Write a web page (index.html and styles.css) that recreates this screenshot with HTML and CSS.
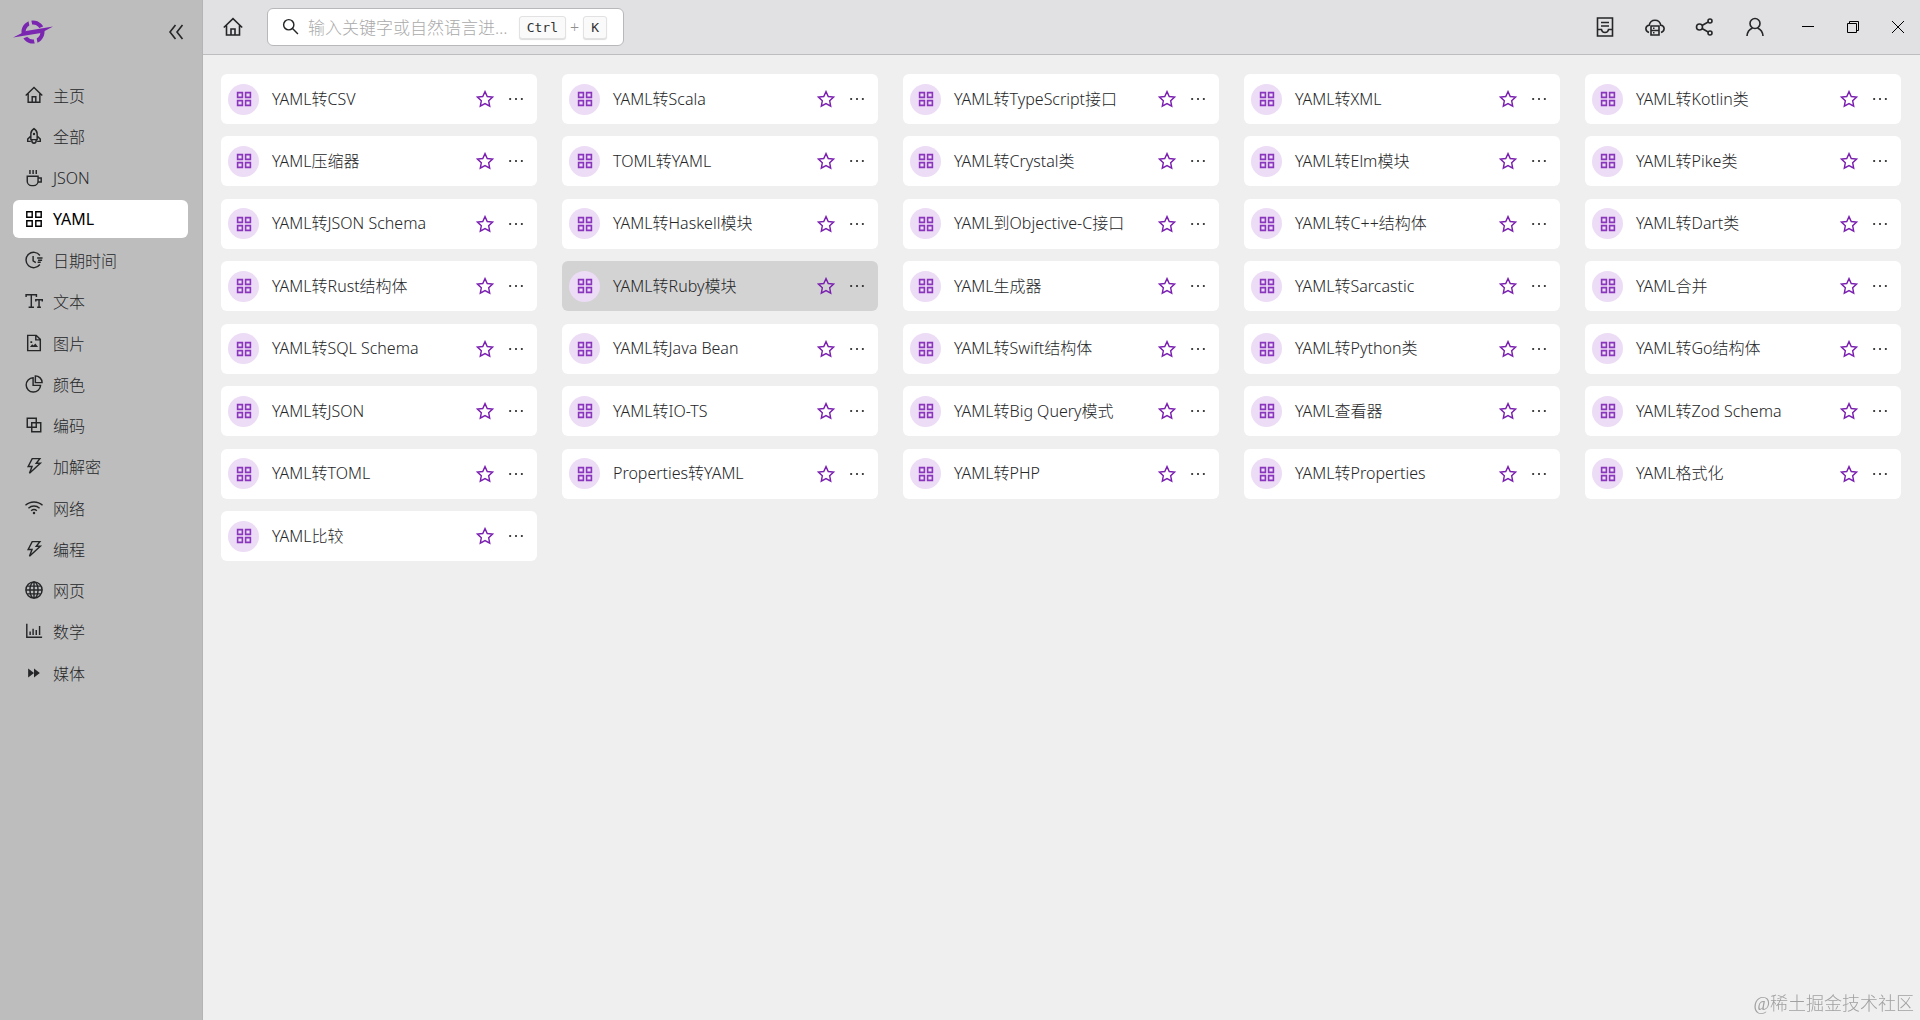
FILE: index.html
```
<!DOCTYPE html>
<html lang="zh-CN">

<head>
    <meta charset="UTF-8">
    <meta name="viewport" content="width=device-width, initial-scale=1.0">
    <title>YAML</title>
    <link rel="stylesheet" href="styles.css">
</head>

<body>
    <svg class="sprite" aria-hidden="true">
        <symbol id="i-home" viewBox="0 0 20 20"><path d="M.8 10.500 10 1.700l9.200 8.800M3.500 8.500v9.500h13v-9.500M8 18v-6h4v6" /></symbol>
        <symbol id="i-rocket" viewBox="0 0 20 20"><path d="M6.500 14V7.500C6.500 5 8 3 10 1.700 12 3 13.500 5 13.500 7.500V14zM6.500 10 3 13.500V16h3.500M13.500 10l3.500 3.500V16h-3.500M7.500 14.500c0 2 1 3.500 2.500 3.500s2.500-1.500 2.500-3.500" /><circle class="solid" cx="10" cy="7.800" r="1.300" /></symbol>
        <symbol id="i-cup" viewBox="0 0 20 20"><path d="M2.500 8h12v5.500a5 5 0 0 1-5 5H7.500a5 5 0 0 1-5-5zM14.500 10H18v4.500h-3.500M5.500 1v4.500M9 1v4.500M12.500 1v4.500" /></symbol>
        <symbol id="i-grid" viewBox="0 0 20 20"><path d="M2 2h6v6h-6zM12 2h6v6h-6zM2 12h6v6h-6zM12 12h6v6h-6z" /></symbol>
        <symbol id="i-time" viewBox="0 0 20 20"><path d="M16.500 5A8.500 8.500 0 1 0 16.500 15M9 5.500V11l3 2M13.500 7.800h6M14.500 10.200h4.500M14 12.500h3.500" /></symbol>
        <symbol id="i-text" viewBox="0 0 20 20"><path d="M1.200 5.500V3h11.500v2.500M7 3v14M4 17h6M12 10.500V8.700h7.200v1.800M15.600 8.700V17M13.500 17h4.200" /></symbol>
        <symbol id="i-image" viewBox="0 0 20 20"><path d="M3 1.500h9.500L17 6v12.500H3zM12 1.500v5h5" /><path class="solid" d="M5.500 14.500 8 11.500l1.500 1.200 2-2.200 3 4zM6 8h2v2H6z" /></symbol>
        <symbol id="i-pie" viewBox="0 0 20 20"><path d="M9 3a8 8 0 1 0 8.300 8.500H9zM11.500 1v7.500h7.500a7.500 7.500 0 0 0-7.500-7.500z" /></symbol>
        <symbol id="i-code" viewBox="0 0 20 20"><path d="M2.500 2.500h10v10h-10zM7.500 7.500h10v10h-10z" /></symbol>
        <symbol id="i-bolt" viewBox="0 0 20 20"><path d="M8 1.800h8.500L12.500 7H17L5 18l2.800-7.500H3.500z" /></symbol>
        <symbol id="i-wifi" viewBox="0 0 20 20"><path d="M.5 7c5.300-5 13.700-5 19 0M3.800 10.200c3.600-3.200 8.800-3.200 12.400 0M6.800 13c2-1.600 4.400-1.600 6.400 0" /><circle class="solid" cx="10" cy="15.500" r="1.400" /></symbol>
        <symbol id="i-globe" viewBox="0 0 20 20"><circle cx="10" cy="10" r="9" /><ellipse cx="10" cy="10" rx="4.500" ry="9" /><path d="M1 10h18M10 1v18M2.500 5.700h15M2.500 14.300h15" /></symbol>
        <symbol id="i-chart" viewBox="0 0 20 20"><path d="M2 2v15h17M5.700 14.500v-4M9 14.500V7.500M12.500 14.500V9M16.200 14.500V4.500" /></symbol>
        <symbol id="i-forward" viewBox="0 0 20 20"><path class="solid" d="M3.500 5 10 10l-6.500 5zM10 5 16.500 10 10 15z" /></symbol>
        <symbol id="i-collapse" viewBox="0 0 20 20"><path d="M9.500 3 4 10l5.500 7M16.500 3 11 10l5.500 7" /></symbol>
        <symbol id="i-search" viewBox="0 0 20 20"><circle cx="7.500" cy="7.500" r="5.700" /><path d="m11.700 11.700 6 6" /></symbol>
        <symbol id="i-star" viewBox="0 0 20 20"><path d="m10 1.800 2.500 5.400 5.900.7-4.300 4.100 1.100 5.900-5.200-2.900-5.200 2.900 1.100-5.900-4.300-4.100 5.900-.7z" /></symbol>
        <symbol id="i-more" viewBox="0 0 20 20"><circle class="solid" cx="3.500" cy="10" r="1.200" /><circle class="solid" cx="10" cy="10" r="1.200" /><circle class="solid" cx="16.500" cy="10" r="1.200" /></symbol>
        <symbol id="i-inbox" viewBox="0 0 20 20"><path d="M2.500 1h15v18h-15zM6 5.500h8M6 9h8M2.500 12.500h4c.500 4 6.500 4 7 0h4" /></symbol>
        <symbol id="i-cloud" viewBox="0 0 20 20"><path d="M4 15.500C-.500 14 .200 8.500 4.200 8.200 5.500 1.500 14.500 1.500 15.800 8.200c4 .3 4.700 5.800.2 7.300M6 9h8v9H6zM6 13.500h8M8 11.300h1.500M8 15.800h1.500" /></symbol>
        <symbol id="i-share" viewBox="0 0 20 20"><circle cx="4.500" cy="10" r="3" /><circle cx="15" cy="4" r="2" /><circle cx="15" cy="16" r="2" /><path d="m7 8.500 6.200-3.500M7 11.500l6.200 3.500" /></symbol>
        <symbol id="i-user" viewBox="0 0 20 20"><circle cx="10" cy="6.500" r="5" /><path d="M2 19c.3-4 2.500-6.700 5.500-8M18 19c-.3-4-2.500-6.700-5.500-8" /></symbol>
        <symbol id="i-min" viewBox="0 0 12 12"><path d="M0 5.500h12" /></symbol>
        <symbol id="i-max" viewBox="0 0 12 12"><path d="M.5 2.500h9v9h-9zM2.500 2.500v-2h9v9h-2" /></symbol>
        <symbol id="i-close" viewBox="0 0 12 12"><path d="m0 0 12 12M12 0 0 12" /></symbol>
    </svg>

    <div class="app">
        <aside class="sidebar">
            <div class="sidebar-head">
                <svg class="logo" viewBox="0 0 40 26" aria-hidden="true">
                    <circle cx="20" cy="13" r="9.500" />
                    <path class="logo-cut" d="M16.500 0 18 7M23.500 26 22 19" />
                    <path class="logo-gap" d="M6 19 34 8" />
                    <path class="logo-wing" d="M0 18.500 13 12 40 7.500 28 14z" />
                </svg>
                <button class="icon-btn" aria-label="收起"><svg class="icon icon-lg"><use href="#i-collapse" /></svg></button>
            </div>
            <nav class="menu">
                <a href="#"><svg class="icon"><use href="#i-home" /></svg>主页</a>
                <a href="#"><svg class="icon"><use href="#i-rocket" /></svg>全部</a>
                <a href="#"><svg class="icon"><use href="#i-cup" /></svg>JSON</a>
                <a href="#" class="active"><svg class="icon"><use href="#i-grid" /></svg>YAML</a>
                <a href="#"><svg class="icon"><use href="#i-time" /></svg>日期时间</a>
                <a href="#"><svg class="icon"><use href="#i-text" /></svg>文本</a>
                <a href="#"><svg class="icon"><use href="#i-image" /></svg>图片</a>
                <a href="#"><svg class="icon"><use href="#i-pie" /></svg>颜色</a>
                <a href="#"><svg class="icon"><use href="#i-code" /></svg>编码</a>
                <a href="#"><svg class="icon"><use href="#i-bolt" /></svg>加解密</a>
                <a href="#"><svg class="icon"><use href="#i-wifi" /></svg>网络</a>
                <a href="#"><svg class="icon"><use href="#i-bolt" /></svg>编程</a>
                <a href="#"><svg class="icon"><use href="#i-globe" /></svg>网页</a>
                <a href="#"><svg class="icon"><use href="#i-chart" /></svg>数学</a>
                <a href="#"><svg class="icon"><use href="#i-forward" /></svg>媒体</a>
            </nav>
        </aside>

        <div class="main">
            <header class="topbar">
                <button class="icon-btn" aria-label="主页"><svg class="icon icon-lg"><use href="#i-home" /></svg></button>
                <label class="search">
                    <svg class="icon"><use href="#i-search" /></svg>
                    <input type="text" placeholder="输入关键字或自然语言进行搜索" aria-label="搜索">
                    <span class="keys"><kbd>Ctrl</kbd>+<kbd>K</kbd></span>
                </label>
                <div class="tools">
                    <button class="icon-btn" aria-label="收件箱"><svg class="icon icon-lg"><use href="#i-inbox" /></svg></button>
                    <button class="icon-btn" aria-label="云端"><svg class="icon icon-lg"><use href="#i-cloud" /></svg></button>
                    <button class="icon-btn" aria-label="分享"><svg class="icon icon-lg"><use href="#i-share" /></svg></button>
                    <button class="icon-btn" aria-label="用户"><svg class="icon icon-lg"><use href="#i-user" /></svg></button>
                </div>
                <div class="window-btns">
                    <button class="icon-btn" aria-label="最小化"><svg><use href="#i-min" /></svg></button>
                    <button class="icon-btn" aria-label="还原"><svg><use href="#i-max" /></svg></button>
                    <button class="icon-btn" aria-label="关闭"><svg><use href="#i-close" /></svg></button>
                </div>
            </header>
            <main class="cards" id="cards"></main>
        </div>
    </div>
    <div class="watermark">@稀土掘金技术社区</div>

    <script>
        const tools = [
            'YAML转CSV', 'YAML转Scala', 'YAML转TypeScript接口', 'YAML转XML', 'YAML转Kotlin类',
            'YAML压缩器', 'TOML转YAML', 'YAML转Crystal类', 'YAML转Elm模块', 'YAML转Pike类',
            'YAML转JSON Schema', 'YAML转Haskell模块', 'YAML到Objective-C接口', 'YAML转C++结构体', 'YAML转Dart类',
            'YAML转Rust结构体', 'YAML转Ruby模块', 'YAML生成器', 'YAML转Sarcastic', 'YAML合并',
            'YAML转SQL Schema', 'YAML转Java Bean', 'YAML转Swift结构体', 'YAML转Python类', 'YAML转Go结构体',
            'YAML转JSON', 'YAML转IO-TS', 'YAML转Big Query模式', 'YAML查看器', 'YAML转Zod Schema',
            'YAML转TOML', 'Properties转YAML', 'YAML转PHP', 'YAML转Properties', 'YAML格式化',
            'YAML比较'
        ];
        const current = 'YAML转Ruby模块';

        document.getElementById('cards').innerHTML = tools.map(name => `
            <div class="card ${name === current ? 'hover' : ''}">
                <span class="badge"><svg class="icon"><use href="#i-grid" /></svg></span>
                <a href="#" class="card-title">${name}</a>
                <button class="icon-btn star" aria-label="收藏"><svg class="icon"><use href="#i-star" /></svg></button>
                <button class="icon-btn" aria-label="更多"><svg class="icon"><use href="#i-more" /></svg></button>
            </div>
        `).join('');
    </script>
</body>

</html>
```

FILE: styles.css
```
* {
    box-sizing: border-box;
}

body {
    margin: 0;
    background-color: #efefef;
    color: #252628;
    font-family: "Noto Sans", "Noto Sans CJK SC", sans-serif;
    font-size: 16px;
    font-weight: 300;
}

a {
    color: inherit;
    text-decoration: none;
}

.sprite {
    display: none;
}

.icon {
    width: 18px;
    height: 18px;
    flex-shrink: 0;
}

.icon-lg {
    width: 20px;
    height: 20px;
}

svg {
    fill: none;
    stroke: currentColor;
    stroke-width: 1.6;
}

.solid {
    fill: currentColor;
    stroke: none;
}

.icon-btn {
    display: flex;
    padding: 0;
    border: none;
    background: none;
    color: inherit;
    cursor: pointer;
}

.app {
    display: flex;
    min-height: 100vh;
}

/* sidebar */
.sidebar {
    width: 203px;
    flex-shrink: 0;
    background-color: #bdbdbd;
    border-right: 1px solid #b4b4b4;
}

.sidebar-head {
    display: flex;
    align-items: center;
    justify-content: space-between;
    height: 64px;
    padding: 0 16px 0 13px;
}

.logo {
    width: 40px;
    height: 26px;
    stroke: #7a26b0;
    stroke-width: 4;
}

.logo .logo-cut {
    stroke: #bdbdbd;
    stroke-width: 3;
}

.logo .logo-gap {
    stroke: #bdbdbd;
    stroke-width: 4;
}

.logo .logo-wing {
    fill: #7a26b0;
    stroke: none;
}

.menu {
    display: flex;
    flex-direction: column;
    gap: 0.32vh;
    padding: 12px 14px 12px 13px;
}

.menu a {
    display: flex;
    align-items: center;
    gap: 10px;
    height: 38px;
    padding: 0 12px;
    border-radius: 6px;
}

.menu .active {
    background-color: #fff;
    color: #000;
    font-weight: 400;
}

/* top bar */
.main {
    flex: 1;
    min-width: 0;
}

.topbar {
    display: flex;
    align-items: center;
    height: 55px;
    padding: 0 16px 0 20px;
    background-color: #e1e1e3;
    border-bottom: 1px solid #bdbdbf;
}

.search {
    display: flex;
    align-items: center;
    width: 357px;
    height: 38px;
    margin-left: 24px;
    padding: 0 16px 0 14px;
    background-color: #fff;
    border: 1px solid #b8b8ba;
    border-radius: 6px;
}

.search input {
    flex: 1;
    min-width: 0;
    margin: 0 10px 0 8px;
    padding: 0;
    border: none;
    outline: none;
    background: none;
    font: inherit;
    font-size: 17px;
    text-overflow: ellipsis;
}

.search input::placeholder {
    color: #aaa;
}

.keys {
    display: flex;
    align-items: center;
    gap: 4px;
    color: #909090;
}

kbd {
    height: 23px;
    padding: 0 7px;
    background-color: #fafafa;
    border: 1px solid #e2e2e2;
    border-radius: 3px;
    box-shadow: 0 1px 1px #ddd;
    color: #303133;
    font-family: "DejaVu Sans Mono", monospace;
    font-size: 13px;
    line-height: 22px;
}

.tools {
    display: flex;
    gap: 30px;
    margin-left: auto;
}

.window-btns {
    display: flex;
    gap: 33px;
    margin-left: 37px;
    color: #000;
}

.window-btns svg {
    width: 12px;
    height: 12px;
    stroke-width: 1;
}

/* cards */
.cards {
    display: grid;
    grid-template-columns: repeat(5, 1fr);
    gap: 0.65vw 25px;
    padding: 19px 19px 19px 18px;
}

.card {
    display: flex;
    align-items: center;
    height: 50px;
    padding: 0 12px 0 7px;
    background-color: #fff;
    border-radius: 6px;
}

.card.hover {
    background-color: #d3d3d3;
}

.badge {
    display: flex;
    align-items: center;
    justify-content: center;
    width: 31px;
    height: 31px;
    margin-right: 13px;
    border-radius: 50%;
    background-color: #ecdcf5;
    color: #8a35bd;
}

.badge .icon {
    width: 16px;
    height: 16px;
    stroke-width: 2;
}

.card-title {
    flex: 1;
    padding-bottom: 3px;
    white-space: nowrap;
}

.card .star {
    margin-right: 13px;
    color: #7a1fb0;
}

.watermark {
    position: fixed;
    right: 6px;
    bottom: 5px;
    color: #a0a0a0;
    font-family: "Liberation Serif", "Noto Sans CJK SC", serif;
    font-size: 18px;
}
```
